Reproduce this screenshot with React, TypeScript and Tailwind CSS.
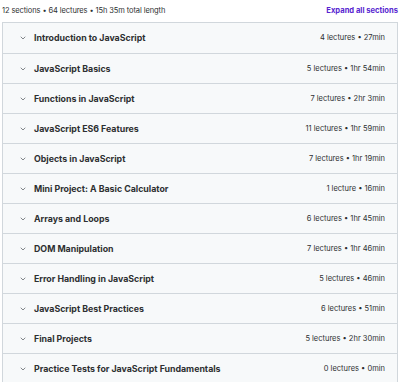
const sections = [
  { title: "Introduction to JavaScript", meta: "4 lectures • 27min" },
  { title: "JavaScript Basics", meta: "5 lectures • 1hr 54min" },
  { title: "Functions in JavaScript", meta: "7 lectures • 2hr 3min" },
  { title: "JavaScript ES6 Features", meta: "11 lectures • 1hr 59min" },
  { title: "Objects in JavaScript", meta: "7 lectures • 1hr 19min" },
  { title: "Mini Project: A Basic Calculator", meta: "1 lecture • 16min" },
  { title: "Arrays and Loops", meta: "6 lectures • 1hr 45min" },
  { title: "DOM Manipulation", meta: "7 lectures • 1hr 46min" },
  { title: "Error Handling in JavaScript", meta: "5 lectures • 46min" },
  { title: "JavaScript Best Practices", meta: "6 lectures • 51min" },
  { title: "Final Projects", meta: "5 lectures • 2hr 30min" },
  { title: "Practice Tests for JavaScript Fundamentals", meta: "0 lectures • 0min" },
];

const Chevron = () => (
  <svg width="8" height="8" viewBox="0 0 24 24" fill="none" stroke="#6a6f73" strokeWidth="2.5" strokeLinecap="round" strokeLinejoin="round">
    <path d="M6 9l6 6 6-6" />
  </svg>
);

const App = () => {
  return (
    <div className="w-[400px] h-[382px] overflow-hidden bg-white font-['Inter',sans-serif]">
      <div className="flex items-center justify-between h-[22px] pl-[2px] pr-[2px]">
        <p className="text-[7.5px] text-[#2d2f31] tracking-[-0.1px]">12 sections • 64 lectures • 15h 35m total length</p>
        <button className="text-[7.6px] font-bold text-[#5624d0]">Expand all sections</button>
      </div>
      <div className="mx-[2px] border border-[#d1d7dc]">
        {sections.map((s, i) => (
          <div
            key={s.title}
            className={`flex items-center h-[30px] bg-[#f7f9fa] pl-[16px] pr-[12px] ${i > 0 ? "border-t border-[#d1d7dc]" : ""}`}
          >
            <span className="w-[15px] flex items-center">
              <Chevron />
            </span>
            <span className="flex-1 text-[8.8px] font-bold text-[#2d2f31]">{s.title}</span>
            <span className="text-[7.5px] text-[#2d2f31]">{s.meta}</span>
          </div>
        ))}
      </div>
    </div>
  );
};

export default App;
